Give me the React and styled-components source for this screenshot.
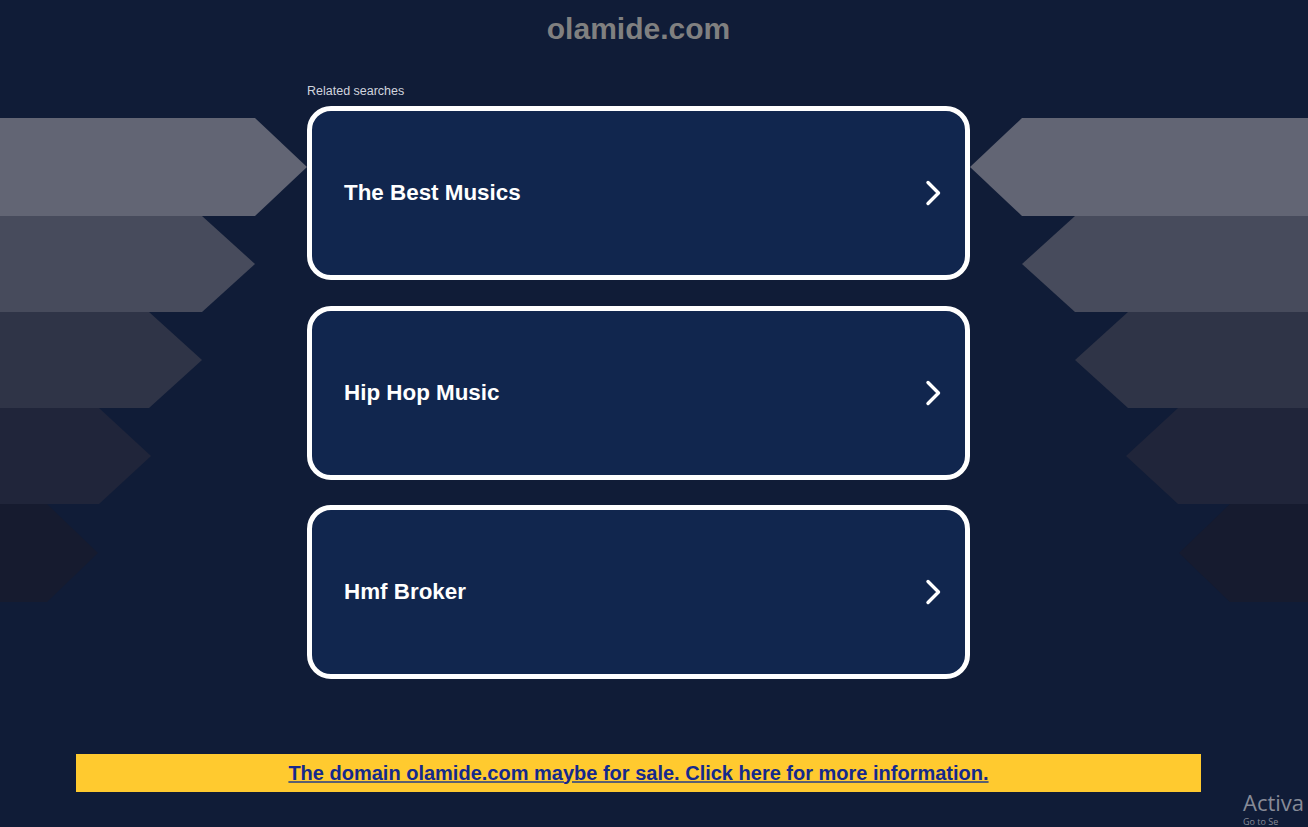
import React from "react";
import styled, { createGlobalStyle } from "styled-components";

const GlobalStyle = createGlobalStyle`
  body {
    margin: 0;
    background: #101c37;
    font-family: "Liberation Sans", Arial, sans-serif;
  }
`;

const Page = styled.div`
  position: relative;
  width: 1308px;
  height: 827px;
  overflow: hidden;
  background: #101c37;
`;

const Decor = styled.svg`
  position: absolute;
  top: 0;
  left: 0;
  z-index: 0;
`;

const Content = styled.main`
  position: relative;
  z-index: 1;
  width: 1277px;
  display: flex;
  flex-direction: column;
  align-items: center;
`;

const Title = styled.h1`
  margin: 12px 0 0;
  font-size: 30px;
  line-height: 34px;
  font-weight: bold;
  color: #808080;
`;

const Related = styled.section`
  width: 663px;
  margin-top: 38px;
  display: flex;
  flex-direction: column;
`;

const RelatedLabel = styled.div`
  font-size: 12.5px;
  line-height: 14px;
  color: #d0d4de;
  margin-bottom: 8px;
`;

const CardList = styled.div`
  display: flex;
  flex-direction: column;
  gap: 25.5px;
`;

const Card = styled.a`
  box-sizing: border-box;
  height: 174px;
  display: flex;
  align-items: center;
  justify-content: space-between;
  padding: 0 23px 0 32px;
  background: #11264e;
  border: 5px solid #ffffff;
  border-radius: 24px;
  color: #ffffff;
  text-decoration: none;
  cursor: pointer;
`;

const CardText = styled.span`
  font-size: 22.4px;
  font-weight: bold;
`;

const Banner = styled.div`
  width: 1125px;
  height: 38px;
  margin-top: 75px;
  background: #ffca2f;
  display: flex;
  align-items: center;
  justify-content: center;
`;

const BannerLink = styled.a`
  font-size: 20px;
  font-weight: bold;
  color: #15298c;
  text-decoration: underline;
  text-decoration-color: #5a6070;
  cursor: pointer;
`;

const Watermark = styled.div`
  position: absolute;
  left: 1243px;
  top: 787px;
  z-index: 2;
  white-space: nowrap;
  color: #878b98;
  font-family: "Open Sans", "Liberation Sans", sans-serif;
`;

const WatermarkTitle = styled.div`
  font-size: 22px;
  line-height: 30px;
`;

const WatermarkSub = styled.div`
  font-size: 9px;
  line-height: 10px;
`;

const Chevron = () => (
  <svg width="17" height="26" viewBox="0 0 17 26">
    <path
      d="M3 2.5 L13.5 13 L3 23.5"
      fill="none"
      stroke="#ffffff"
      strokeWidth="3.4"
      strokeLinecap="round"
      strokeLinejoin="round"
    />
  </svg>
);

const arrows = [
  { top: 118, bottom: 216, body: 255, tip: 307, rBody: 1022, rTip: 970, color: "#626574" },
  { top: 216, bottom: 312, body: 202, tip: 255, rBody: 1075, rTip: 1022, color: "#474b5c" },
  { top: 312, bottom: 408, body: 149, tip: 202, rBody: 1128, rTip: 1075, color: "#2f3447" },
  { top: 408, bottom: 504, body: 99, tip: 151, rBody: 1178, rTip: 1126, color: "#20253a" },
  { top: 504, bottom: 602, body: 47, tip: 98, rBody: 1230, rTip: 1179, color: "#161b2f" },
];

const Background = () => (
  <Decor width="1308" height="827" viewBox="0 0 1308 827">
    {arrows.map((a, i) => {
      const mid = (a.top + a.bottom) / 2;
      return (
        <g key={i} fill={a.color}>
          <polygon
            points={`0,${a.top} ${a.body},${a.top} ${a.tip},${mid} ${a.body},${a.bottom} 0,${a.bottom}`}
          />
          <polygon
            points={`1308,${a.top} ${a.rBody},${a.top} ${a.rTip},${mid} ${a.rBody},${a.bottom} 1308,${a.bottom}`}
          />
        </g>
      );
    })}
  </Decor>
);

const searches = ["The Best Musics", "Hip Hop Music", "Hmf Broker"];

export default function App() {
  return (
    <Page>
      <GlobalStyle />
      <Background />
      <Content>
        <Title>olamide.com</Title>
        <Related>
          <RelatedLabel>Related searches</RelatedLabel>
          <CardList>
            {searches.map((s) => (
              <Card key={s}>
                <CardText>{s}</CardText>
                <Chevron />
              </Card>
            ))}
          </CardList>
        </Related>
        <Banner>
          <BannerLink>
            The domain olamide.com maybe for sale. Click here for more information.
          </BannerLink>
        </Banner>
      </Content>
      <Watermark>
        <WatermarkTitle>Activa</WatermarkTitle>
        <WatermarkSub>Go to Se</WatermarkSub>
      </Watermark>
    </Page>
  );
}
